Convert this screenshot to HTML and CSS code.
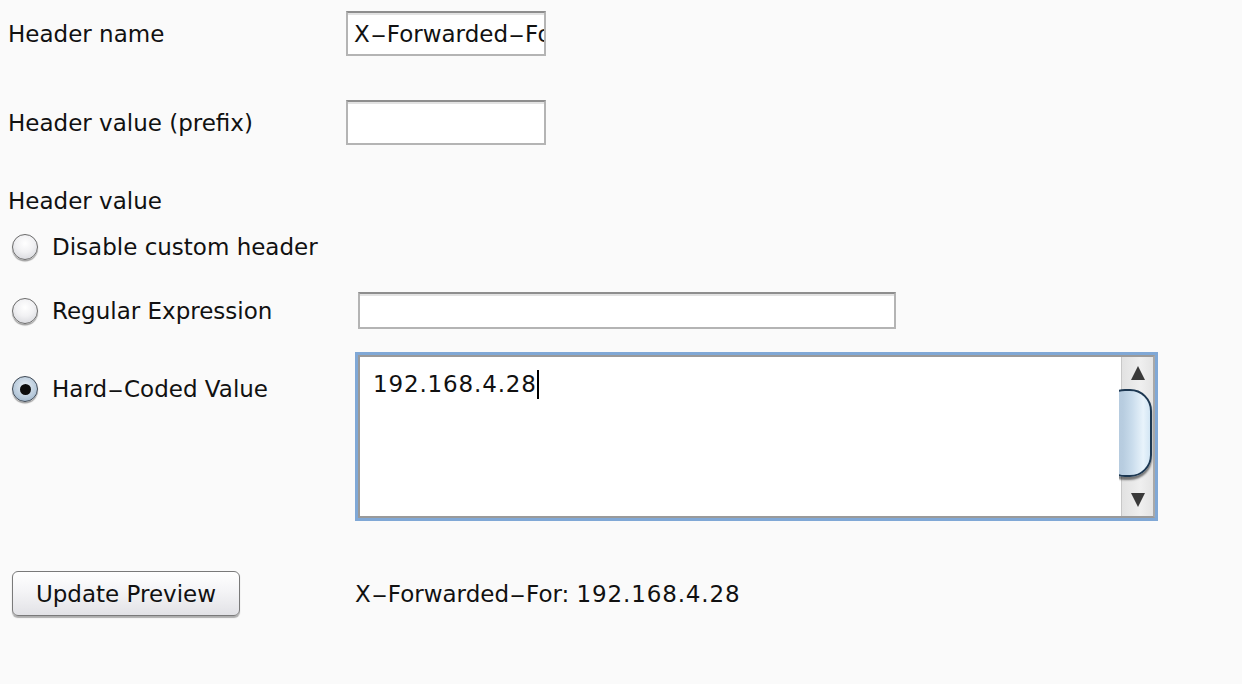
FILE: index.html
```html
<!DOCTYPE html>
<html>
<head>
<meta charset="utf-8">
<link rel="stylesheet" href="styles.css">
</head>
<body>
<div class="form">
  <div class="row row-name">
    <div class="label-cell">Header name</div>
    <div class="field small"><span class="field-text">X<span class="hy">-</span>Forwarded<span class="hy">-</span>For</span></div>
  </div>
  <div class="row row-prefix">
    <div class="label-cell">Header value (prefix)</div>
    <div class="field small"></div>
  </div>
  <div class="section-label">Header value</div>
  <div class="radio-row r-disable">
    <div class="radio-cell"><span class="radio"></span><span class="radio-label">Disable custom header</span></div>
  </div>
  <div class="radio-row r-regex">
    <div class="radio-cell"><span class="radio"></span><span class="radio-label">Regular Expression</span></div>
    <div class="field wide"></div>
  </div>
  <div class="radio-row r-hard">
    <div class="radio-cell top"><span class="radio checked"></span><span class="radio-label">Hard<span class="hy">-</span>Coded Value</span></div>
    <div class="textarea">
      <div class="textarea-inner">
        <div class="ta-content"><span class="digits">192.168.4.28</span><span class="caret"></span></div>
        <div class="scrollbar">
          <div class="arrow up"></div>
          <div class="track"><div class="thumb-clip"><div class="thumb"></div></div></div>
          <div class="arrow down"></div>
        </div>
      </div>
    </div>
  </div>
  <div class="radio-row r-button">
    <div class="button-cell"><button class="btn">Update Preview</button></div>
    <div class="preview">X<span class="hy">-</span>Forwarded<span class="hy">-</span>For: <span class="digits">192.168.4.28</span></div>
  </div>
</div>
</body>
</html>
```
FILE: styles.css
```css
html, body {
  margin: 0;
  padding: 0;
  background: #fafafa;
}
body {
  width: 1242px;
  height: 684px;
  overflow: hidden;
  font-family: "DejaVu Sans", "Liberation Sans", sans-serif;
  font-size: 23px;
  color: #111;
}
.hy {
  display: inline-block;
  width: 17px;
  text-align: center;
  transform: scaleX(2);
}
.digits {
  letter-spacing: 0.85px;
}
.form {
  display: flex;
  flex-direction: column;
  padding: 11px 0 0 8px;
}
.row {
  display: flex;
  align-items: center;
  height: 45px;
}
.row-prefix { margin-top: 44px; }
.label-cell {
  width: 338px;
  flex: none;
}
.field {
  box-sizing: border-box;
  background: #fff;
  border: 2px solid #b4b4b4;
  border-top-color: #8e8e8e;
  box-shadow: inset 0 2px 0 #e2e2e2;
  display: flex;
  align-items: center;
  overflow: hidden;
  white-space: nowrap;
}
.field.small {
  width: 200px;
  height: 45px;
}
.field-text {
  padding-left: 6px;
}
.field.wide {
  width: 538px;
  height: 37px;
  margin-left: 3px;
}
.section-label {
  margin-top: 42px;
  height: 28px;
  line-height: 28px;
}
.radio-row {
  display: flex;
  align-items: center;
}
.r-disable { margin-top: 18px; height: 28px; }
.r-regex { margin-top: 31px; height: 37px; }
.r-hard { margin-top: 23px; align-items: flex-start; }
.r-button { margin-top: 50px; height: 45px; }
.radio-cell {
  width: 347px;
  flex: none;
  display: flex;
  align-items: center;
  height: 28px;
}
.radio-cell.top {
  margin-top: 23px;
}
.radio {
  box-sizing: border-box;
  width: 26px;
  height: 26px;
  border-radius: 50%;
  margin-left: 4px;
  margin-right: 14px;
  border: 1.5px solid #6a6a6a;
  background: radial-gradient(circle at 50% 35%, #ffffff 0%, #f1f1f3 45%, #cfd0d6 100%);
  box-shadow: 0 1.5px 1px rgba(0,0,0,0.35);
  display: flex;
  align-items: center;
  justify-content: center;
  flex: none;
}
.radio.checked {
  border-color: #3e4854;
  background: radial-gradient(circle at 50% 40%, #e9f0f6 0%, #b8cadb 60%, #8ea6bd 100%);
}
.radio.checked::after {
  content: "";
  width: 11px;
  height: 11px;
  border-radius: 50%;
  background: #0c0c0c;
}
.textarea {
  box-sizing: border-box;
  width: 803px;
  height: 169px;
  border: 3px solid #80a8d6;
  background: #fff;
}
.textarea-inner {
  box-sizing: border-box;
  height: 100%;
  border: 2px solid #9a9a9a;
  border-right-color: #a8a8a8;
  display: flex;
}
.ta-content {
  flex: 1;
  padding: 14px 0 0 13px;
  display: flex;
  align-items: flex-start;
  height: 30px;
}
.caret {
  display: inline-block;
  width: 2px;
  height: 29px;
  background: #000;
  margin-top: -1px;
}
.scrollbar {
  width: 31px;
  flex: none;
  background: linear-gradient(to right, #e2e2e2, #efefef 60%, #e4e4e4);
  border-left: 1px solid #c8c8c8;
  display: flex;
  flex-direction: column;
  align-items: center;
}
.arrow {
  width: 0;
  height: 0;
  border-left: 7px solid transparent;
  border-right: 7px solid transparent;
  flex: none;
}
.arrow.up {
  border-bottom: 14px solid #3a3a3a;
  margin-top: 9px;
}
.arrow.down {
  border-top: 14px solid #3a3a3a;
  margin-bottom: 9px;
}
.track {
  flex: 1;
  width: 100%;
  position: relative;
}
.thumb-clip {
  position: absolute;
  left: -3px;
  right: 0;
  top: 9px;
  height: 94px;
  overflow: hidden;
}
.thumb {
  position: absolute;
  left: -16px;
  right: 1px;
  top: 0;
  height: 88px;
  box-sizing: border-box;
  border: 2px solid #1d3852;
  border-radius: 22px;
  background: linear-gradient(to right, #b2c8dc 0%, #b8cde0 40%, #c9dcec 60%, #e8f3fb 85%, #d3e6f4 100%);
  box-shadow: 0 3px 2px rgba(0,0,0,0.5);
}
.button-cell {
  width: 347px;
  flex: none;
}
.btn {
  box-sizing: border-box;
  margin-left: 4px;
  width: 228px;
  height: 45px;
  border: 1px solid #7a7a7a;
  border-radius: 6px;
  background: linear-gradient(to bottom, #ffffff 0%, #f4f4f6 45%, #e2e2e6 100%);
  box-shadow: 0 1.5px 1px rgba(0,0,0,0.3);
  font-family: "DejaVu Sans", "Liberation Sans", sans-serif;
  font-size: 23px;
  color: #111;
  padding: 0;
}
.preview {
  font-size: 23px;
}
```
